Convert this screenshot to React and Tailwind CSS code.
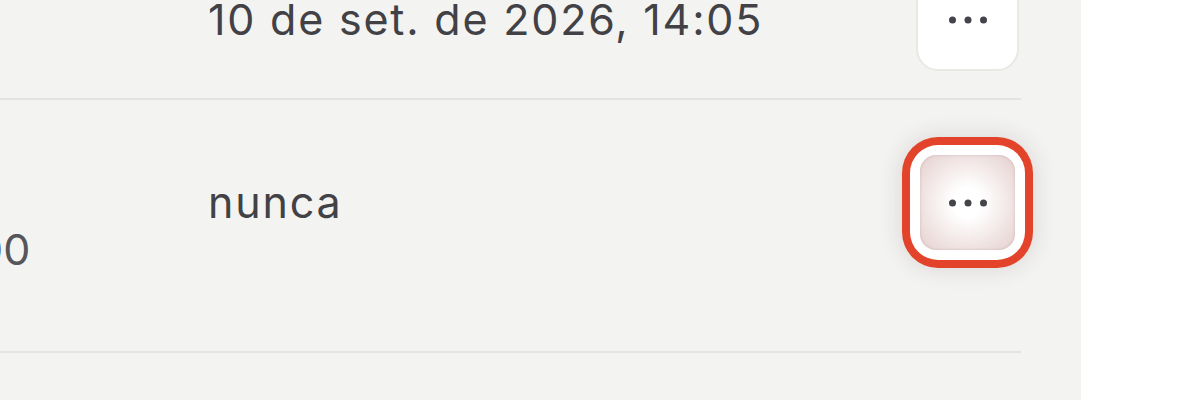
import React from "react";

function Dots() {
  return (
    <svg width="40" height="8" viewBox="0 0 40 8" className="block">
      <circle cx="4.5" cy="4" r="3.5" fill="#444449" />
      <circle cx="20" cy="4" r="3.5" fill="#444449" />
      <circle cx="35.5" cy="4" r="3.5" fill="#444449" />
    </svg>
  );
}

function Row({ name, phone, last, focused, rowClass }) {
  return (
    <div className={`flex items-start border-b-2 border-[#e3e3e0] pt-[51px] ${rowClass}`}>
      <div className="w-[208px] shrink-0 pt-[14px] whitespace-nowrap">
        <div className="-ml-[375px] flex flex-col items-start">
          <div className="text-[43px] leading-[56px] text-[#3d3d42] font-medium tracking-[1.8px]">{name}</div>
          <div className="text-[43px] leading-[56px] text-[#55555b]">{phone}</div>
        </div>
      </div>
      <div className="flex-1 h-[103px] flex items-center text-[43px] tracking-[1.8px] text-[#414146] whitespace-nowrap">
        {last}
      </div>
      <div className="pr-[2px]">
        {focused ? (
          <button className="w-[103px] h-[103px] rounded-[22px] bg-white p-[4px] flex shadow-[0_0_0_6px_#ffffff,0_0_0_14px_#e2432a,0_0_22px_16px_rgba(60,40,40,0.12)]">
            <span className="flex-1 rounded-[16px] flex items-center justify-center bg-[radial-gradient(circle,#ffffff_22%,#e4cfcd_100%)] shadow-[inset_0_0_3px_rgba(120,80,80,0.25)]">
              <Dots />
            </span>
          </button>
        ) : (
          <button className="w-[103px] h-[103px] rounded-[22px] bg-white border-2 border-[#e8e8e5] flex items-center justify-center">
            <Dots />
          </button>
        )}
      </div>
    </div>
  );
}

export default function App() {
  return (
    <div className="w-[1200px] h-[400px] overflow-hidden bg-white flex font-['Inter',sans-serif]">
      <div className="w-[1081px] h-full bg-[#f3f3f1] pr-[60px] overflow-hidden">
        <Row
          name="Mariana"
          phone="+351 912 34"
          last="10 de set. de 2026, 14:05"
          rowClass="-mt-[83px] h-[183px]"
        />
        <Row
          name="Rafael"
          phone="+55 21 98877-6600"
          last="nunca"
          focused
          rowClass="h-[253px]"
        />
        <Row
          name="Beatriz Lima"
          phone="+55 31 99123-4500"
          last="hoje, 09:12"
          rowClass="h-[253px]"
        />
      </div>
    </div>
  );
}
